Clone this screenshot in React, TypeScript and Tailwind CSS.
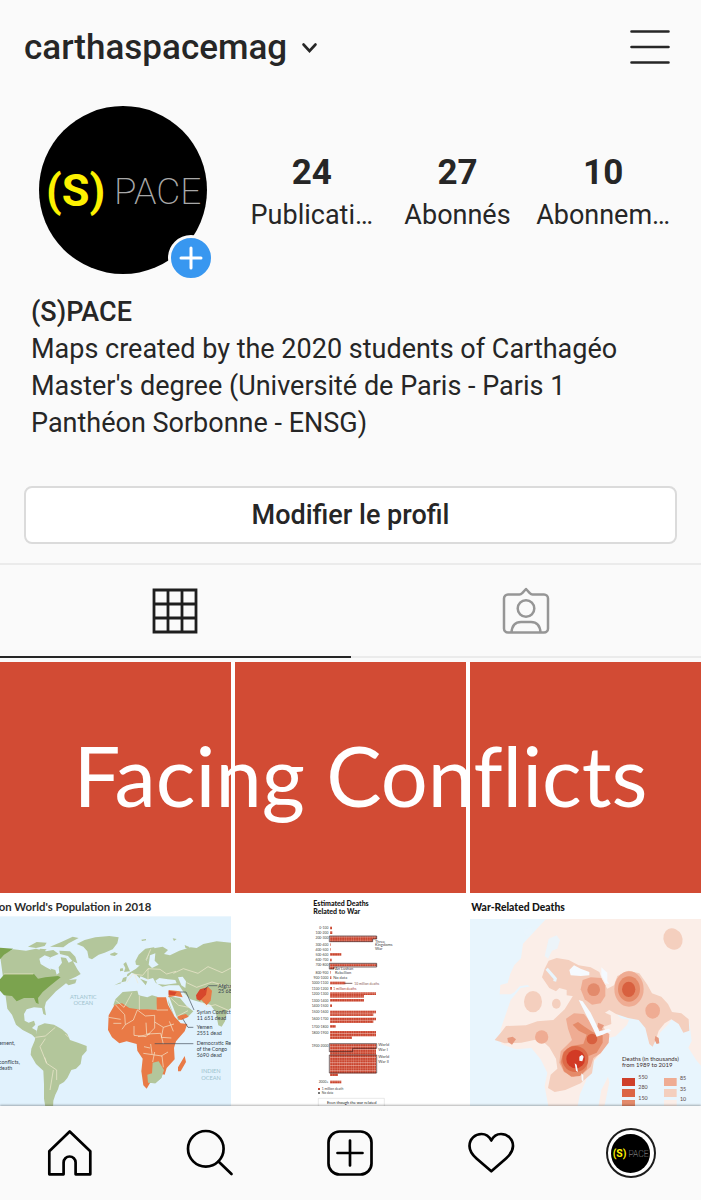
import React from 'react';

const stats = [
  { name: 'Publications', label: 'Publicati…', value: 24 },
  { name: 'Abonnés', label: 'Abonnés', value: 27 },
  { name: 'Abonnements', label: 'Abonnem…', value: 10 },
];

const Wordmark: React.FC<{ className?: string }> = ({ className }) => (
  <svg viewBox="0 0 168 168" className={className} role="img" aria-label="(S)PACE">
    <circle cx="84" cy="84" r="84" fill="#000" />
    <text x="7" y="100" fontSize="45" fontWeight="700" fill="#fdf101" fontFamily="Roboto, sans-serif">
      (S)
    </text>
    <text x="75" y="98" fontSize="37" fontWeight="200" fill="#a8a8a8" fontFamily="Roboto, sans-serif">
      PACE
    </text>
  </svg>
);

const Header: React.FC = () => (
  <header className="flex h-24 shrink-0 items-center justify-between pl-6 pr-[30px]">
    <button type="button" className="flex items-center gap-3.5 text-[35px] leading-10 font-medium">
      <h1>carthaspacemag</h1>
      <svg width="17" height="12" viewBox="0 0 17 12" fill="none" stroke="currentColor" strokeWidth="2.6" strokeLinecap="round" aria-hidden="true">
        <path d="M2.5 2.5 8.5 9l6-6.5" />
      </svg>
    </button>
    <button type="button" aria-label="Menu">
      <svg width="42" height="36" viewBox="0 1 42 36" stroke="currentColor" strokeWidth="2.6" strokeLinecap="round" aria-hidden="true">
        <path d="M2.5 2.500h37M2.500 18h37M2.500 33.500h37" />
      </svg>
    </button>
  </header>
);

const Profile: React.FC = () => (
  <section className="pt-[10px]">
    <div className="flex items-center gap-8 pl-[39px] pr-[25px]">
      <div className="relative size-[168px] shrink-0">
        <Wordmark className="size-full" />
        <button
          type="button"
          aria-label="Ajouter une story"
          className="absolute -right-[7px] -bottom-[7px] flex size-[46px] items-center justify-center rounded-full border-3 border-[#fafafa] bg-[#3897f0]"
        >
          <svg width="24" height="24" viewBox="0 0 24 24" stroke="#fff" strokeWidth="3" strokeLinecap="round" aria-hidden="true">
            <path d="M12 2v20M2 12h20" />
          </svg>
        </button>
      </div>
      <ul className="grid flex-1 grid-cols-3 pt-2 text-center">
        {stats.map(stat => (
          <li key={stat.name}>
            <a href="#" title={stat.name} className="block">
              <span className="block text-[35px] leading-[42px] font-bold">{stat.value}</span>
              <span className="block text-[27px] leading-[42px] whitespace-nowrap">{stat.label}</span>
            </a>
          </li>
        ))}
      </ul>
    </div>

    <div className="mt-5 px-[31px] text-[27px] leading-[37px]">
      <h2 className="font-medium">(S)PACE</h2>
      <p>
        Maps created by the 2020 students of Carthagéo Master's degree (Université de Paris - Paris 1 Panthéon
        Sorbonne - ENSG)
      </p>
    </div>

    <div className="mt-11 px-6">
      <button
        type="button"
        className="h-[58px] w-full rounded-lg border-2 border-[#dbdbdb] bg-white text-[27px] leading-9 font-medium"
      >
        Modifier le profil
      </button>
    </div>
  </section>
);

const Tabs: React.FC = () => (
  <div role="tablist" className="mt-[19px] grid h-[95px] grid-cols-2 border-t-2 border-[#ebebeb]">
    <button
      type="button"
      role="tab"
      aria-selected="true"
      aria-label="Grille"
      className="flex items-center justify-center border-b-2 border-[#262626]"
    >
      <svg width="46" height="46" viewBox="0 0 46 46" fill="none" stroke="#1e1e1e" strokeWidth="2.8" aria-hidden="true">
        <path d="M2 2h42v42H2zM2 16h42M2 30h42M16 2v42M30 2v42" />
      </svg>
    </button>
    <button
      type="button"
      role="tab"
      aria-selected="false"
      aria-label="Identifications"
      className="flex items-center justify-center border-b-2 border-[#ebebeb]"
    >
      <svg width="48" height="48" viewBox="0 0 48 48" fill="none" stroke="#969696" strokeWidth="2.5" strokeLinejoin="round" aria-hidden="true">
        <path d="M6 7.5h11.5c1 0 1.800-.4 2.500-1.200L24 2l4 4.300c.7.800 1.500 1.200 2.500 1.200H42a4 4 0 0 1 4 4v30a4 4 0 0 1-4 4H6a4 4 0 0 1-4-4v-30a4 4 0 0 1 4-4Z" />
        <circle cx="24" cy="21.500" r="8.300" />
        <path d="M9.500 45.500c.5-7 4-10.500 9.500-10.500h10c5.500 0 9 3.500 9.500 10.500" />
      </svg>
    </button>
  </div>
);

const PopulationMap: React.FC = () => (
  <svg viewBox="0 21 693 693" className="block aspect-square w-full bg-white" fontFamily="Lato, sans-serif">
    <text x="-4" y="62" fontSize="34" fontWeight="700" fill="#2b2b2b">on World's Population in 2018</text>
    <rect y="79" width="693" height="640" fill="#e1f2fd" />
    <g fill="#b3c69b">
      {/* North America */}
      <path d="M0 196 40 178l38 4 30-6 30 8 22-4 16 12-24 10-14 16 8 16 20 6 4 14 8-6-2-16 10-14-4-16 16 2 8 14 12-6 14 26 10 14-14 8-22 10 24-2-4 12-20 6-8-6-30 24-30 32-4 16 4 24-8-4-4-18-24-2-22 6-8 14 2 20 12 6 16-6 4 12-10 10 14 8 0 16 14 10 20-2-4 8-26-2-18-18-28-14-20-16-12-30-14-18Z" />
      <path d="m84 170 26-14 30 2-6 10-26 6Zm66 0 34-14 34-16 18 4-30 16-16 12Zm28 12 32 2 16 16 6 20-14-6-14-16-24-6Zm-58-6 20 2-8 8-16-2Z" />
      <path d="m230 162 24-12 32-8 42-4 28 4-4 18-14 18-24 10-18 6-20 14-10-4-4-20-12-14Z" />
      <path d="m330 192 14-5 10 4-10 7-12-2ZM106 350l24 10M216 236l8 10-18-2Z" />
      {/* South America */}
      <path d="m114 408 20-8 28 4 24 14 16 14 8 18 24 8 26 10 0 14-14 16-4 24-14 14-14 4-12 24-10 12-14 8-4 14-8 16-6 18-2 46-8 12-10-14-8-50 0-44-2-40-22-20-16-28 2-18 10-24Z" />
      {/* Europe and Asia */}
      <path d="m358 278 20-4 4-22 26-16 18-16 14-8 8-24 18-14 22-4 16 10-12 12 18 4 28-14 34-10 18 2 20-12 40-8 43 4v196l-12 10-6 30-10 16-10-4-8-40-16-22-32-8-28-8-18-18-16-24-30 0-20 4-20-12-8-14-14 4-8 18-10-12-18-20-14-6-10 10-16 6-6 16-20 6Z" />
      <path d="m406 214 10-20 20-18 26-4 6 8-22 14-8 22-14 12-16-4ZM370 222l8-6 6 14 6 14-18 2 4-12Zm-10 14 8-2 2 8-10 2ZM424 149l14-2 0 4-12 2Zm94-4 12 2-8 6Zm36 20 14 6 0 8-12-6Z" />
      <path d="m346 328 22-22 44-4 4 14 26 6 14-6 16 4-2 40-110-4-20-10ZM450 520l26-6 16 26-8 24-18 16-22-2-2-24Z" />
      <path d="m504 318 36 6 20 24 20 16-16 16-32 12-14-22-12-28Z" />
    </g>
    <g fill="#e1f2fd">
      <path d="m450 196 16-6-2 22 12 12-20 10-10-10ZM466 272l12-8 26 4 22 2 4 10-34 4-24-2ZM534 262l14-2 10 14-2 20-12-8ZM118 206l16-10 16 6-6 18 10 20-16-8-16-10Z" />
      <path d="m500 318 8 4 26 68-8-2Z" />
    </g>
    <path d="m420 262 34 14 2 10 10 12M414 266l20 26" stroke="#e1f2fd" strokeWidth="7" fill="none" />
    {/* United States */}
    <path d="m14 252 88 0 12 14 22-4 38-4 8 4-30 24-24 20-14 18 2 18-8-4-6-14-30 0-22 10-14-16-24-2-12-14V268ZM0 173l40 3-28 18-12 14Z" fill="#7ba34e" />
    {/* African countries */}
    <path d="m326 376 18-32 22-4 22 14 26 4 30 0 26 2 0-38h28l6 22 20 36 18 20 20 2-8 22-26 30-6 20 2 34-24 26-6 20-22-6-12 14-20 34-10-10-6-42 4-38-16-24-2-20-30-8-22 6-22-18-12-22Zm208 156 20-34 4 18-16 28-8 0ZM532 378l26-6 8 8-22 10-8-2ZM506 300l34 4 8 18-22-4-20 4ZM602 310l22-20 12 12-4 30-12 14-18-18Z" fill="#e97a46" />
    <path d="m588 316 12-18 22-6-4 22-18 18-10-4ZM506 302l24 4-6 10-18-2Z" fill="#d7472c" />
    {/* South Africa */}
    <path d="m458 518 18-4 16 26-8 24-18 16-22-2-2-24 14-4Z" fill="#b3c69b" />
    <g fill="none" stroke="#f3ead2" strokeWidth="2">
      <path d="m346 344 28 30 2 30 24-14 12-30 24 18 28-2 0 38-26 26-36-4 0-28M326 382l36 6M376 404l-10 14M340 400l24 0M464 396l26 16 32-10M470 360h34M438 398l2 34 42-2 8 32M414 440l36-8M430 490l56 8 4 34M452 462l4 30M490 412l-6 30 30 2M458 516l6-30M484 498l20-12M508 394l12 30M432 470l18 4" />
      <path d="m346 330 26 22 24-44M418 318v42M106 442l30-4 30-26M136 446l-16 24 20 50 30 20 0 30M140 520l-6-18M160 540l-10 60M196 432l10 10M380 278l18-26 30 4 16-20 36 2 20 14 28-8M404 254l10 26M444 236v34M520 250l30-14 44 14 30-20 42 18 27-14M560 278l30 14 46-16 57 16M602 334l20 16 24-6 46 20M452 178l-14 32M12 252h88" />
      <path d="m512 324 24 22 30 6M530 380l34-18" />
    </g>
    <g fill="none" stroke="#3f4a56" strokeWidth="2">
      <path d="M464 461h116M612 300l14-13h26M540 306h18l24 54M548 386l16 26h16" />
    </g>
    <g fontSize="16" fill="#37424c">
      <text x="654" y="293">Afgha</text>
      <text x="654" y="310">25 68</text>
      <text x="590" y="372">Syrian Conflict</text>
      <text x="590" y="390">11 651 dead</text>
      <text x="590" y="417">Yemen</text>
      <text x="590" y="435">2551 dead</text>
      <text x="590" y="465">Democratic Rep</text>
      <text x="590" y="483">of the Congo</text>
      <text x="590" y="500">5690 dead</text>
      <text x="-3" y="466">ement,</text>
      <text x="-3" y="523">conflicts,</text>
      <text x="-3" y="541">death</text>
    </g>
    <g fontSize="17" fill="#9dc3cd" textAnchor="middle">
      <text x="250" y="327">ATLANTIC</text>
      <text x="250" y="346">OCEAN</text>
      <text x="633" y="549">INDIEN</text>
      <text x="633" y="569">OCEAN</text>
    </g>
  </svg>
);

// y position, period label and bar rows (width of each row of marks)
const periods = [
  { y: 114, label: '0-100', rows: [6] },
  { y: 128, label: '100-200', rows: [7] },
  { y: 143, label: '200-300', rows: [140, 128] },
  { y: 164, label: '300-400', rows: [2] },
  { y: 178, label: '400-500', rows: [2] },
  { y: 193, label: '500-600', rows: [34] },
  { y: 210, label: '600-700', rows: [5] },
  { y: 225, label: '700-800', rows: [140, 12] },
  { y: 247, label: '800-900', rows: [2] },
  { y: 263, label: '900-1000', rows: [4] },
  { y: 279, label: '1000-1100', rows: [46] },
  { y: 295, label: '1100-1200', rows: [6] },
  { y: 311, label: '1200-1300', rows: [138, 102] },
  { y: 331, label: '1300-1400', rows: [102] },
  { y: 347, label: '1400-1500', rows: [6] },
  { y: 366, label: '1500-1600', rows: [138, 130] },
  { y: 387, label: '1600-1700', rows: [138, 130] },
  { y: 409, label: '1700-1800', rows: [17] },
  { y: 427, label: '1800-1900', rows: [138, 138, 66] },
  { y: 466, label: '1900-2000', rows: [138, 138, 138, 138, 138, 138, 138, 138, 138, 138, 138, 24] },
  { y: 576, label: '2000+', rows: [34] },
];

const DeathsChart: React.FC = () => (
  <svg viewBox="0 21 693 693" className="block aspect-square w-full bg-white" fontFamily="Lato, sans-serif">
    <defs>
      <pattern id="marks" width="7" height="8" patternUnits="userSpaceOnUse">
        <rect width="7" height="8" fill="#eba392" />
        <rect width="6" height="7" fill="#c9452f" />
      </pattern>
    </defs>
    <g fontSize="21" fontWeight="900" fill="#151515">
      <text x="235" y="47">Estimated Deaths</text>
      <text x="235" y="73">Related to War</text>
    </g>
    {periods.map(period => (
      <g key={period.label}>
        <text x="280" y={period.y + 4} fontSize="10" fill="#444" textAnchor="end">{period.label}</text>
        {period.rows.map((width, i) => (
          <rect key={i} x="285" y={period.y - 4 + i * 8} width={width} height="8" fill="url(#marks)" />
        ))}
      </g>
    ))}
    <g fill="none" stroke="#3c2020" strokeWidth="2">
      <path d="M283 138h142v9h-12v8H283ZM283 220h142v11H297v6h-14ZM283 461h142v14h-72v10h-70ZM283 495h142v54H283Z" />
      <path d="M328 280h24" />
    </g>
    <g fontSize="12" fill="#444">
      <text x="420" y="158">Three</text>
      <text x="420" y="169">Kingdoms</text>
      <text x="420" y="180">War</text>
      <text x="300" y="241">An Lushan</text>
      <text x="300" y="251">Rebellion</text>
      <text x="295" y="267">No data</text>
      <text x="358" y="284" fontSize="10" fill="#8a5a50">10 million deaths</text>
      <text x="295" y="299" fontSize="10" fill="#a33524">1 million deaths</text>
      <text x="430" y="468">World</text>
      <text x="430" y="482">War I</text>
      <text x="430" y="505">World</text>
      <text x="430" y="519">War II</text>
      <text x="260" y="601" fontSize="10">1 million death</text>
      <text x="260" y="613" fontSize="10">No data</text>
    </g>
    <rect x="249" y="594" width="6" height="6" fill="#c9452f" />
    <rect x="249" y="606" width="6" height="6" fill="#777" />
    <path d="M250 660v-35h198v35" fill="none" stroke="#bbb" strokeWidth="1" />
    <text x="350" y="641" fontSize="12" fill="#222" textAnchor="middle">Even though the war related</text>
  </svg>
);

const HeatMap: React.FC = () => (
  <svg viewBox="12 21 693 693" className="block aspect-square w-full bg-white" fontFamily="Lato, sans-serif">
    <text x="16" y="62" fontSize="31" fontWeight="900" fill="#151515">War-Related Deaths</text>
    <rect x="12" y="87" width="693" height="640" fill="#e8f5fd" />
    {/* land */}
    <path d="m240 87 465 0v440l-14-16-24-38 10-20-6-50-22-28-24 2-18 26-24 24-8 28-14-14-12-50-18-10-30-2-46-18-10 4 20 20 24 4-6 16-34 34-24 6-12-14-42-76-22-14-44 2-30-14-14-4-8-18-16-4-6 14-22-14-24-18-24 4-16 18-10 6-34 0 2-28 22-6 8-28 12-26 20-20 6-44Z" fill="#fbeee8" />
    <path d="m134 330 30-36 60-10 26-2 12 28 60 8 24 14 52 100 36 4-32 60-36 36-6 40-18 40-22 110-60 0-24-134 8-40-20-40-28-34-46 4-44-16-2-44Z" fill="#fbeee8" />
    <path d="m406 600 20-40 4 16-14 70-20 10Z" fill="#fbeee8" />
    <path d="m248 146 24-10 10 14-8 26-16 6-12 24-10-8ZM170 120l26-8 6 16-22 10Z" fill="#e8f5fd" opacity=".8" />
    {/* lowest level */}
    <path d="m108 424 12-16 60-2 34-12 48-4 34-32 26-42 36 8 30 36 34 70 8 10-24 44-22 26-6 40-34 30-46 20-32 6-20-12 8-40 20-18-4-30-20-34-28-26-56 12-50 2-30-10Z" fill="#f4cfbe" />
    <path d="m236 236 12-24 24-8 36 6 30 16 36 6 26 14 10 28 14 22 20-10 10-28 34-16 32 8 24 34 14 26 28 10 20 22 12 24 28 4 22 18 2 34-18 6-14-26-22-14-20 12-18 22-8 26-10 22-10-8-12-48-20-24-32-6-36-12-20-12-16 10-18-4-24-10-26-16-12-20-32-4 0-16-22-6-10 10-20-10-22-32ZM372 340l32 22 30 14 2 26-26 10-18-22Z" fill="#f4cfbe" />
    <ellipse cx="621" cy="147" rx="28" ry="33" fill="#f4cfbe" transform="rotate(-25 621 147)" />
    <ellipse cx="201" cy="335" rx="27" ry="32" fill="#f4cfbe" />
    <ellipse cx="271" cy="341" rx="13" ry="15" fill="#f4cfbe" />
    {/* middle levels */}
    <path d="m300 386 24-16 30 2 16 20 34 22 26 18-2 26-24 32-22 14-8 26-24 22-28 8-28-14-14-28 4-34 20-20 14-14-12-34Z" fill="#efac93" />
    <path d="m320 404 16-8 20 14 24 16 30 10 0 22-18 30-24 10-6 40-20 20-26 2-22-16-10-28 8-30 24-18 36-6 10-28-24-12Z" fill="#e58a68" />
    <path d="m350 270 24-8 32 2 12 22 0 32-14 22-26 4-22-16-12-30Z" fill="#efac93" />
    <circle cx="383" cy="299" r="19" fill="#e38a6b" />
    <ellipse cx="489" cy="297" rx="44" ry="53" fill="#efac93" />
    <ellipse cx="489" cy="297" rx="33" ry="38" fill="#e58a68" />
    <ellipse cx="488" cy="298" rx="20" ry="23" fill="#d8603f" />
    <ellipse cx="560" cy="362" rx="22" ry="24" fill="#efac93" />
    <ellipse cx="227" cy="441" rx="20" ry="20" fill="#efac93" />
    <path d="m124 444 16-4 10 8-12 16-12-8ZM568 438l10 6 2 16-8 2-6-12Z" fill="#e7997e" />
    <path d="m396 398 18 8-8 14-12-8Z" fill="#e7997e" />
    {/* highest levels */}
    <circle cx="378" cy="447" r="16" fill="#d8603f" />
    <circle cx="328" cy="507" r="39" fill="#dd6a48" />
    <circle cx="329" cy="507" r="28" fill="#d23a25" />
    {/* seas and lakes */}
    <path d="m338 330 12 4 24 34 22 46 4 10 28-8 8 6-26 12-18 6-10-22-26-52ZM310 240l14-14 20 10 26 10 0 10-26 2-30-2ZM406 232l18 16 0 26 6 8-12-2-12-24ZM340 500l8-6 5 6-4 14-9-2ZM326 520l6 4 4 22-6-4ZM346 550l6 6 0 20-5-6Z" fill="#f5faff" />
    <path d="m242 236 26 30-2 8" fill="none" stroke="#e8f5fd" strokeWidth="9" />
    {/* legend */}
    <g fontSize="18" fill="#3d2d2d">
      <text x="468" y="512">Deaths (in thousands)</text>
      <text x="468" y="532">from 1989 to 2019</text>
    </g>
    <g fontSize="16" fill="#5a4646">
      <text x="517" y="567">550</text>
      <text x="517" y="598">280</text>
      <text x="517" y="631">150</text>
      <text x="642" y="571">85</text>
      <text x="642" y="602">35</text>
      <text x="642" y="632">10</text>
    </g>
    <rect x="468" y="564" width="39" height="24" fill="#cf3f29" />
    <rect x="468" y="597" width="39" height="24" fill="#dc6544" />
    <rect x="468" y="630" width="39" height="24" fill="#e38a6b" />
    <rect x="594" y="564" width="38" height="24" fill="#efac93" />
    <rect x="594" y="597" width="38" height="24" fill="#f4cfbe" />
    <rect x="594" y="630" width="38" height="24" fill="#fbeee8" />
  </svg>
);

const Posts: React.FC = () => (
  <div className="mt-1 flex flex-col gap-1 bg-white">
    {/* One title runs across the three posts of the first row */}
    <div className="relative grid grid-cols-3 gap-1">
      <a href="#" aria-label="Publication 1" className="aspect-square bg-[#d24b34]" />
      <a href="#" aria-label="Publication 2" className="aspect-square bg-[#d24b34]" />
      <a href="#" aria-label="Publication 3" className="aspect-square bg-[#d24b34]" />
      <p className="pointer-events-none absolute inset-0 flex items-center justify-center pb-1 pl-5 font-['Lato',sans-serif] text-[83px] leading-none text-white [font-variant-ligatures:none]">
        Facing Conflicts
      </p>
    </div>
    <div className="grid grid-cols-3 gap-1">
      <a href="#" aria-label="World's Population in 2018"><PopulationMap /></a>
      <a href="#" aria-label="Estimated Deaths Related to War"><DeathsChart /></a>
      <a href="#" aria-label="War-Related Deaths"><HeatMap /></a>
    </div>
  </div>
);

const navIcons = [
  { label: 'Accueil', shape: <path d="M23.700 2.500 44.300 22.300v23H29.600V33.500a6 6 0 0 0-12 0v11.800H3.300v-23Z" /> },
  { label: 'Rechercher', shape: <><circle cx="19.800" cy="19.800" r="17.800" /><path d="m32.500 32.500 13 12.500" /></> },
  { label: 'Ajouter', shape: <><rect x="2.500" y="2.500" width="43" height="43" rx="11" /><path d="M24 11.500v25M11.500 24h25" /></> },
  { label: 'Activité', shape: <path d="M24.300 11.500C22 7 18.500 5 14.500 5 8 5 2.500 10 2.500 17c0 5 2.500 8.500 7 12.500l14.800 12.800L39 29.500c4.500-4 7-7.500 7-12.500 0-7-5.500-12-12-12-4 0-7.500 2-9.700 6.500Z" /> },
];

const BottomNav: React.FC = () => (
  <nav className="z-10 grid h-[94px] shrink-0 grid-cols-5 bg-[#fafafa] shadow-[0_-1px_2px_rgba(0,0,0,0.3)]">
    {navIcons.map(item => (
      <a key={item.label} href="#" aria-label={item.label} className="flex items-center justify-center">
        <svg width="48" height="48" viewBox="0 0 48 48" fill="none" stroke="#000" strokeWidth="2.700" strokeLinecap="round" strokeLinejoin="round">
          {item.shape}
        </svg>
      </a>
    ))}
    <a href="#" aria-label="Profil" className="flex items-center justify-center">
      <span className="flex size-[50px] items-center justify-center rounded-full border-2 border-[#1c1c1c] bg-white">
        <Wordmark className="size-[39px]" />
      </span>
    </a>
  </nav>
);

const App: React.FC = () => {
  return (
    <div className="flex h-screen flex-col bg-[#fafafa] font-['Roboto',sans-serif] text-[#262626]">
      <Header />
      <main className="min-h-0 flex-1 overflow-y-auto [scrollbar-width:none]">
        <Profile />
        <Tabs />
        <Posts />
      </main>
      <BottomNav />
    </div>
  );
};

export default App;
